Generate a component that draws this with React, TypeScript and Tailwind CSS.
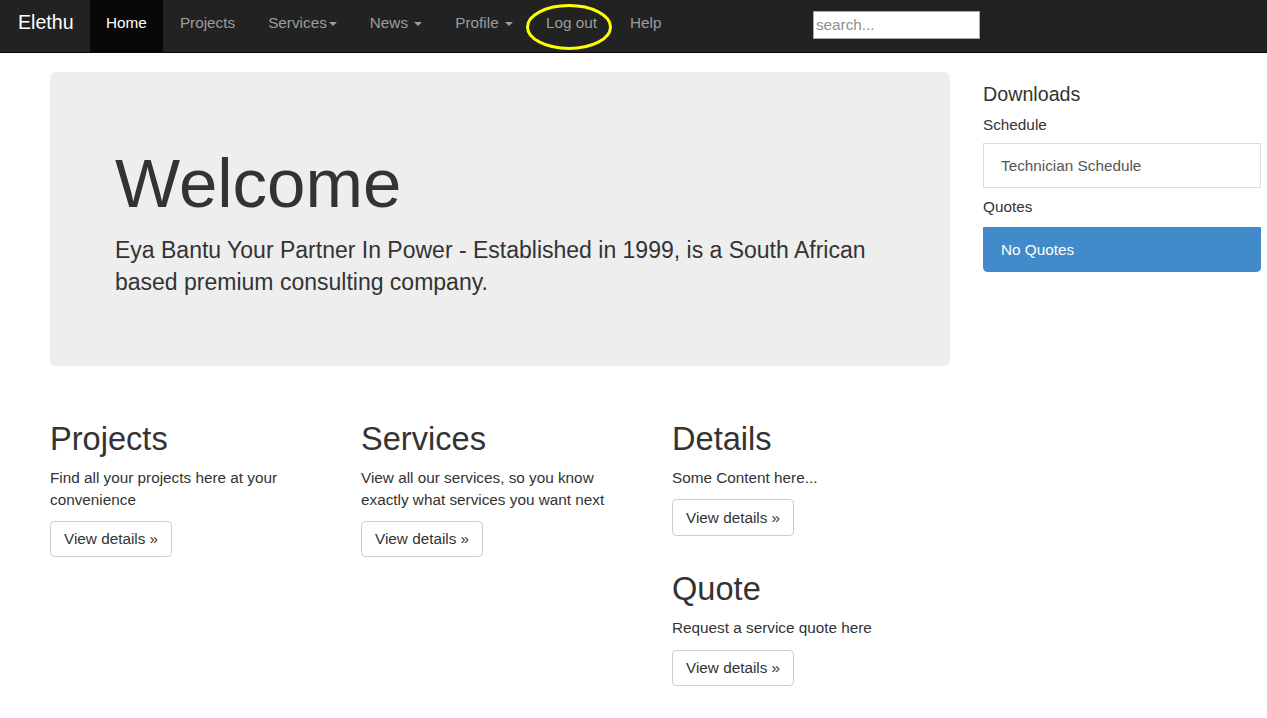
import React from 'react';

function Caret() {
  return (
    <span className="inline-block w-0 h-0 ml-[2px] align-middle border-x-[4.3px] border-t-[4.3px] border-x-transparent border-t-current" />
  );
}

function NavLink({ children, active = false }: { children: React.ReactNode; active?: boolean }) {
  return (
    <a
      className={
        active
          ? 'h-[52px] px-[16.5px] pt-[12px] leading-[21.4px] text-white bg-[#080808]'
          : 'h-[52px] px-[16.5px] pt-[12px] leading-[21.4px] text-[#9d9d9d]'
      }
    >
      {children}
    </a>
  );
}

function ViewButton() {
  return (
    <p className="mb-[10.7px]">
      <button className="px-[13px] py-[6.4px] border border-[#ccc] rounded-[4.3px] bg-white text-[#333] text-[15.3px] leading-[21.6px]">
        View details »
      </button>
    </p>
  );
}

function Block({ title, text, extraTop = false }: { title: string; text: string; extraTop?: boolean }) {
  return (
    <div className={extraTop ? 'mt-[35px]' : ''}>
      <h2 className="mt-[21px] mb-[10.7px] text-[32.6px] leading-[1.1] text-[#333]">{title}</h2>
      <p className="mb-[10.7px] leading-[21.6px]">{text}</p>
      <ViewButton />
    </div>
  );
}

export default function App() {
  return (
    <div className="min-h-[718px] bg-white text-[#333] text-[15.3px] leading-[21.4px]" style={{ fontFamily: '"Liberation Sans", Arial, sans-serif' }}>
      {/* Navbar */}
      <nav className="relative h-[53px] bg-[#222] border-b border-[#080808] flex items-start text-[15.3px]">
        <a className="h-[52px] pl-[18px] pr-[16px] pt-[11.6px] text-[19.6px] leading-[21.4px] text-white">Elethu</a>
        <div className="flex">
          <NavLink active>Home</NavLink>
          <NavLink>Projects</NavLink>
          <NavLink>
            Services<Caret />
          </NavLink>
          <NavLink>
            News <Caret />
          </NavLink>
          <NavLink>
            Profile <Caret />
          </NavLink>
          <NavLink>Log out</NavLink>
          <NavLink>Help</NavLink>
        </div>
        <input
          placeholder="search..."
          className="ml-[135px] mt-[11px] w-[167px] h-[28px] px-[2px] bg-white border border-[#a9a9a9] text-[15.3px] text-[#333] placeholder:text-[#8f8f8f] outline-none"
        />
        <svg className="absolute left-[525px] top-[3px] pointer-events-none" width="88" height="48" viewBox="0 0 88 48">
          <ellipse cx="44" cy="24" rx="41.5" ry="21.5" fill="none" stroke="#ffff00" strokeWidth="3" />
        </svg>
      </nav>

      {/* Body */}
      <div className="flex pl-[50px] gap-[33px]">
        <main className="w-[900px] pt-[19px]">
          <div className="bg-[#eee] rounded-[6.4px] px-[65px] pt-[53px] pb-[52px] mb-[34px]">
            <h1 className="mt-[21px] mb-[11.7px] text-[69px] leading-[1.1] text-[#333]">Welcome</h1>
            <p className="text-[23px] leading-[32px] mb-[16px]">
              Eya Bantu Your Partner In Power - Established in 1999, is a South African based premium consulting company.
            </p>
          </div>
          <div className="grid grid-cols-[278px_278px_278px] gap-x-[33px]">
            <Block title="Projects" text="Find all your projects here at your convenience" />
            <Block title="Services" text="View all our services, so you know exactly what services you want next" />
            <div>
              <Block title="Details" text="Some Content here..." />
              <Block title="Quote" text="Request a service quote here" extraTop />
            </div>
          </div>
        </main>

        <aside className="w-[278px] pt-[19px]">
          <h4 className="mt-[11.5px] mb-[8.7px] text-[19.7px] leading-[1.1] text-[#333]">Downloads</h4>
          <div className="mb-[8px]">Schedule</div>
          <div className="border border-[#ddd] px-[17px] py-[10.7px] text-[#555] mb-[8px]">Technician Schedule</div>
          <div className="mb-[10px]">Quotes</div>
          <div className="bg-[#428bca] border border-[#428bca] rounded-b-[4.3px] px-[17px] py-[10.7px] text-white">No Quotes</div>
        </aside>
      </div>
    </div>
  );
}
